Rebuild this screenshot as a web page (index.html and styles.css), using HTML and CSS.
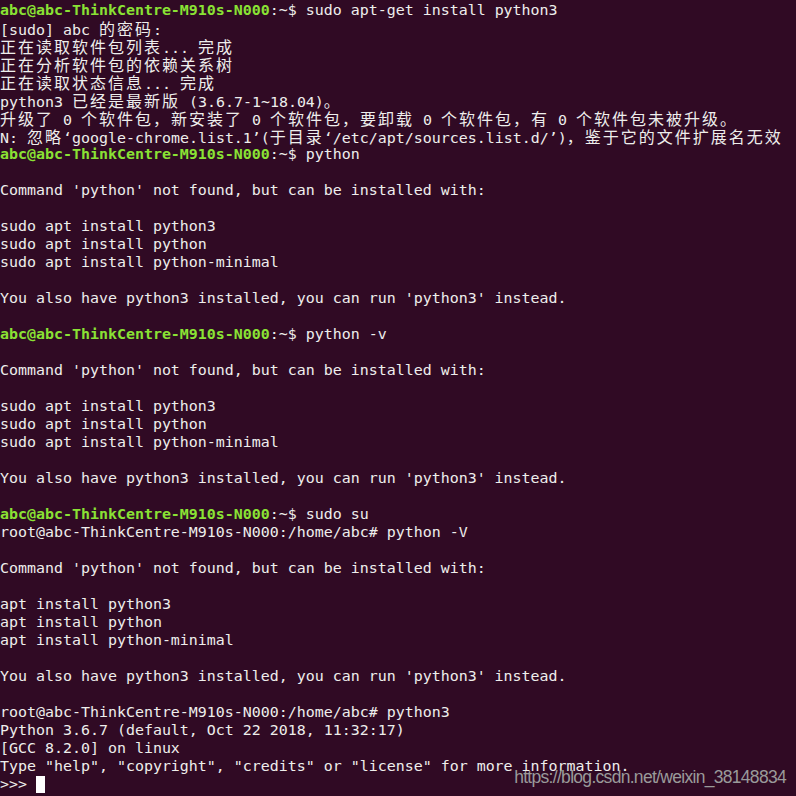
FILE: index.html
```html
<!DOCTYPE html>
<html>
<head>
<meta charset="utf-8">
<link rel="stylesheet" href="styles.css">
</head>
<body>
<div class="term">
<div class="ln"><span class="pr">abc@abc-ThinkCentre-M910s-N000</span>:~$ sudo apt-get install python3</div>
<div class="ln">[sudo] abc <span class="c">的密码</span>:</div>
<div class="ln"><span class="c">正在读取软件包列表</span>... <span class="c">完成</span></div>
<div class="ln"><span class="c">正在分析软件包的依赖关系树</span></div>
<div class="ln"><span class="c">正在读取状态信息</span>... <span class="c">完成</span></div>
<div class="ln">python3 <span class="c">已经是最新版</span> (3.6.7-1~18.04)<span class="c">。</span></div>
<div class="ln"><span class="c">升级了</span> 0 <span class="c">个软件包，新安装了</span> 0 <span class="c">个软件包，要卸载</span> 0 <span class="c">个软件包，有</span> 0 <span class="c">个软件包未被升级。</span></div>
<div class="ln">N: <span class="c">忽略</span>‘google-chrome.list.1’(<span class="c">于目录</span>‘/etc/apt/sources.list.d/’)<span class="c">，鉴于它的文件扩展名无效</span></div>
<div class="ln"><span class="pr">abc@abc-ThinkCentre-M910s-N000</span>:~$ python</div>
<div class="ln"></div>
<div class="ln">Command 'python' not found, but can be installed with:</div>
<div class="ln"></div>
<div class="ln">sudo apt install python3</div>
<div class="ln">sudo apt install python</div>
<div class="ln">sudo apt install python-minimal</div>
<div class="ln"></div>
<div class="ln">You also have python3 installed, you can run 'python3' instead.</div>
<div class="ln"></div>
<div class="ln"><span class="pr">abc@abc-ThinkCentre-M910s-N000</span>:~$ python -v</div>
<div class="ln"></div>
<div class="ln">Command 'python' not found, but can be installed with:</div>
<div class="ln"></div>
<div class="ln">sudo apt install python3</div>
<div class="ln">sudo apt install python</div>
<div class="ln">sudo apt install python-minimal</div>
<div class="ln"></div>
<div class="ln">You also have python3 installed, you can run 'python3' instead.</div>
<div class="ln"></div>
<div class="ln"><span class="pr">abc@abc-ThinkCentre-M910s-N000</span>:~$ sudo su</div>
<div class="ln">root@abc-ThinkCentre-M910s-N000:/home/abc# python -V</div>
<div class="ln"></div>
<div class="ln">Command 'python' not found, but can be installed with:</div>
<div class="ln"></div>
<div class="ln">apt install python3</div>
<div class="ln">apt install python</div>
<div class="ln">apt install python-minimal</div>
<div class="ln"></div>
<div class="ln">You also have python3 installed, you can run 'python3' instead.</div>
<div class="ln"></div>
<div class="ln">root@abc-ThinkCentre-M910s-N000:/home/abc# python3</div>
<div class="ln">Python 3.6.7 (default, Oct 22 2018, 11:32:17)</div>
<div class="ln">[GCC 8.2.0] on linux</div>
<div class="ln">Type "help", "copyright", "credits" or "license" for more information.</div>
<div class="ln">&gt;&gt;&gt; <span class="cursor"></span></div>
</div>
<div class="wm">https://blog.csdn.net/weixin_38148834</div>
</body>
</html>
```
FILE: styles.css
```css
html, body {
  margin: 0;
  padding: 0;
  background: #300a24;
  width: 796px;
  height: 796px;
  overflow: hidden;
}
body {
  position: relative;
}
.term {
  padding-top: 1px;
  font-family: "DejaVu Sans Mono", "Liberation Mono", monospace;
  font-size: 14.95px;
  line-height: 18px;
  color: #eeeeec;
}
.ln {
  height: 18px;
  white-space: pre;
}
.pr {
  color: #8ae234;
  font-weight: bold;
}
.c {
  font-family: "Noto Sans CJK SC", sans-serif;
  font-size: 16px;
  letter-spacing: 2px;
  line-height: 18px;
}
.cursor {
  display: inline-block;
  width: 9px;
  height: 17px;
  background: #ffffff;
  vertical-align: -4px;
}
.wm {
  position: absolute;
  right: 10px;
  bottom: 8px;
  font-family: "Liberation Sans", Arial, sans-serif;
  font-size: 17.5px;
  letter-spacing: -0.7px;
  line-height: 22px;
  color: #9a9a9a;
}
```
